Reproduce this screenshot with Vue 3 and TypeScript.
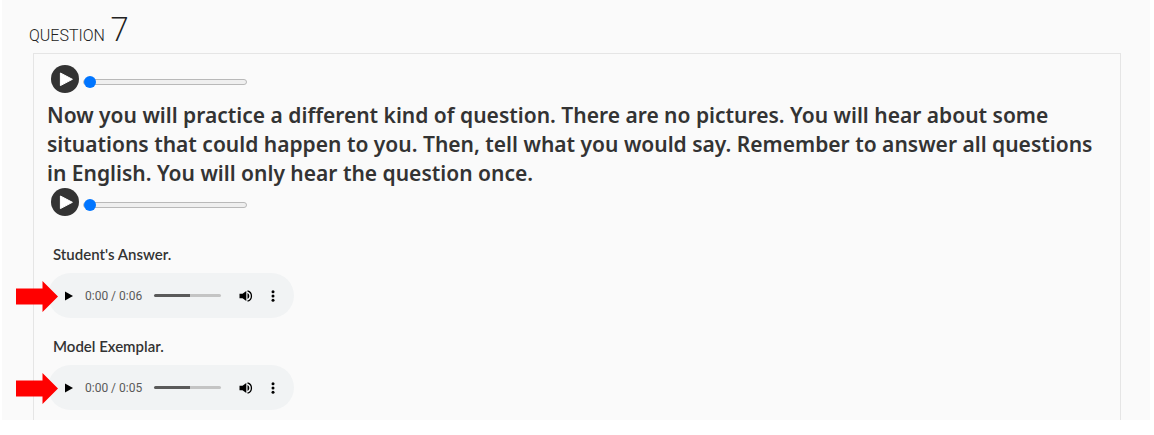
<script setup lang="ts">
import { ref } from 'vue'

interface Answer {
  id: string
  label: string
  duration: string
  progress: number
}

const prompts = ref([
  { id: 'directions', position: 0 },
  { id: 'question', position: 0 },
])

const answers = ref<Answer[]>([
  { id: 'student', label: "Student's Answer.", duration: '0:06', progress: 53 },
  { id: 'model', label: 'Model Exemplar.', duration: '0:05', progress: 53 },
])
</script>

<template>
  <main class="page">
    <h1 class="heading">QUESTION <span class="number">7</span></h1>
    <section class="panel">
      <template v-for="(prompt, index) in prompts" :key="prompt.id">
        <div class="prompt-player">
          <button class="round-play" type="button" :aria-label="`Play ${prompt.id}`">
            <svg viewBox="0 0 28 28" width="28" height="28" aria-hidden="true">
              <circle cx="14" cy="14" r="14" fill="#333" />
              <path d="M9.4 8v12.6l12-6.3z" fill="#fff" stroke="#fff" stroke-width="1" stroke-linejoin="round" />
            </svg>
          </button>
          <input v-model.number="prompt.position" class="seek" type="range" min="0" max="100" :aria-label="`Position in ${prompt.id}`" />
        </div>
        <p v-if="index === 0" class="directions">
          Now you will practice a different kind of question. There are no pictures. You will hear about some
          situations that could happen to you. Then, tell what you would say. Remember to answer all questions
          in English. You will only hear the question once.
        </p>
      </template>

      <div v-for="answer in answers" :key="answer.id" class="answer">
        <h2 class="label">{{ answer.label }}</h2>
        <div class="audio" role="group" :aria-label="answer.label">
          <svg class="arrow" viewBox="0 0 42 31" width="42" height="31" aria-hidden="true">
            <path d="M0 7.5h26.5V0L42 15.5 26.5 31v-7.5H0z" fill="#f00" />
          </svg>
          <button class="control play" type="button" aria-label="Play">
            <svg viewBox="0 0 8 10" width="8" height="10" aria-hidden="true">
              <path d="M0 .5v9L8 5z" fill="#000" />
            </svg>
          </button>
          <span class="time">0:00 / {{ answer.duration }}</span>
          <input
            v-model.number="answer.progress"
            class="progress"
            type="range"
            min="0"
            max="100"
            aria-label="Audio position"
            :style="{ '--played': `${answer.progress}%` }"
          />
          <button class="control volume" type="button" aria-label="Mute">
            <svg viewBox="0 0 14 14" width="14" height="14" aria-hidden="true">
              <path d="M.5 4.8v4.4h3L7.3 12V2L3.5 4.8z" fill="#000" />
              <path d="M8.5 4.1v5.8a3.2 3.2 0 0 0 0-5.8z" fill="#000" />
              <path d="M8.5 1.8a5.4 5.4 0 0 1 0 10.4" fill="none" stroke="#000" stroke-width="1.3" />
            </svg>
          </button>
          <button class="control more" type="button" aria-label="More options">
            <svg viewBox="0 0 4 12" width="4" height="12" aria-hidden="true">
              <circle cx="2" cy="1.7" r="1.5" />
              <circle cx="2" cy="6" r="1.5" />
              <circle cx="2" cy="10.3" r="1.5" />
            </svg>
          </button>
        </div>
      </div>
    </section>
  </main>
</template>

<style>
body {
  background: #fff;
}
</style>

<style scoped>
.page {
  margin: 0 4px 0 2px;
  padding: 12px 29px 0 31px;
  background: #fafafa;
  color: #333;
}

.heading {
  display: flex;
  align-items: baseline;
  gap: 5px;
  height: 41px;
  margin: 0 0 0 -4px;
  font: 300 16px/34px Roboto, sans-serif;
  color: #222;
}

.number {
  font-family: "Open Sans", sans-serif;
  font-size: 33px;
  font-weight: 300;
}

.panel {
  padding: 11px 13px 10px;
  border: 1px solid #e5e5e5;
  border-bottom: 0;
}

.prompt-player {
  display: flex;
  align-items: center;
  gap: 4px;
  height: 28px;
  padding-left: 4px;
}

button {
  display: flex;
  align-items: center;
  justify-content: center;
  padding: 0;
  border: 0;
  background: none;
  cursor: pointer;
}

.seek,
.progress {
  appearance: none;
  margin: 0;
  background: none;
}

.seek {
  width: 164px;
  height: 12px;
  margin-top: 5px;
}

.seek::-webkit-slider-runnable-track {
  box-sizing: border-box;
  height: 6px;
  border: 1px solid #b9b9b9;
  border-radius: 3px;
  background: #efefef;
}

.seek::-webkit-slider-thumb {
  appearance: none;
  width: 12px;
  height: 12px;
  margin-top: -4px;
  border-radius: 50%;
  background: #0075ff;
}

.directions {
  margin: 8px 0 0;
  font: 600 21px/29px "Noto Sans", "Open Sans", sans-serif;
}

.answer {
  padding-top: 28px;
}

.answer + .answer {
  padding-top: 18px;
}

.label {
  margin: 0 0 9px 6px;
  font: 600 15px/20px Lato, sans-serif;
}

.audio {
  position: relative;
  display: flex;
  align-items: center;
  box-sizing: border-box;
  width: 246px;
  height: 45px;
  margin-left: 1px;
  padding-left: 17px;
  border-radius: 23px;
  background: #f1f3f4;
}

.arrow {
  position: absolute;
  left: -32px;
  top: 8px;
}

.time {
  width: 56px;
  margin: 0 13px 0 12px;
  font: 400 12px/16px Roboto, sans-serif;
  color: #5a5a5a;
  white-space: nowrap;
}

.progress {
  width: 67px;
  height: 12px;
}

.progress::-webkit-slider-runnable-track {
  height: 3px;
  border-radius: 2px;
  background: linear-gradient(to right, #5a5a5a var(--played), #c4c4c4 var(--played));
}

.progress::-webkit-slider-thumb {
  appearance: none;
  width: 1px;
  height: 3px;
}

.volume,
.more {
  margin-left: 18px;
}
</style>
